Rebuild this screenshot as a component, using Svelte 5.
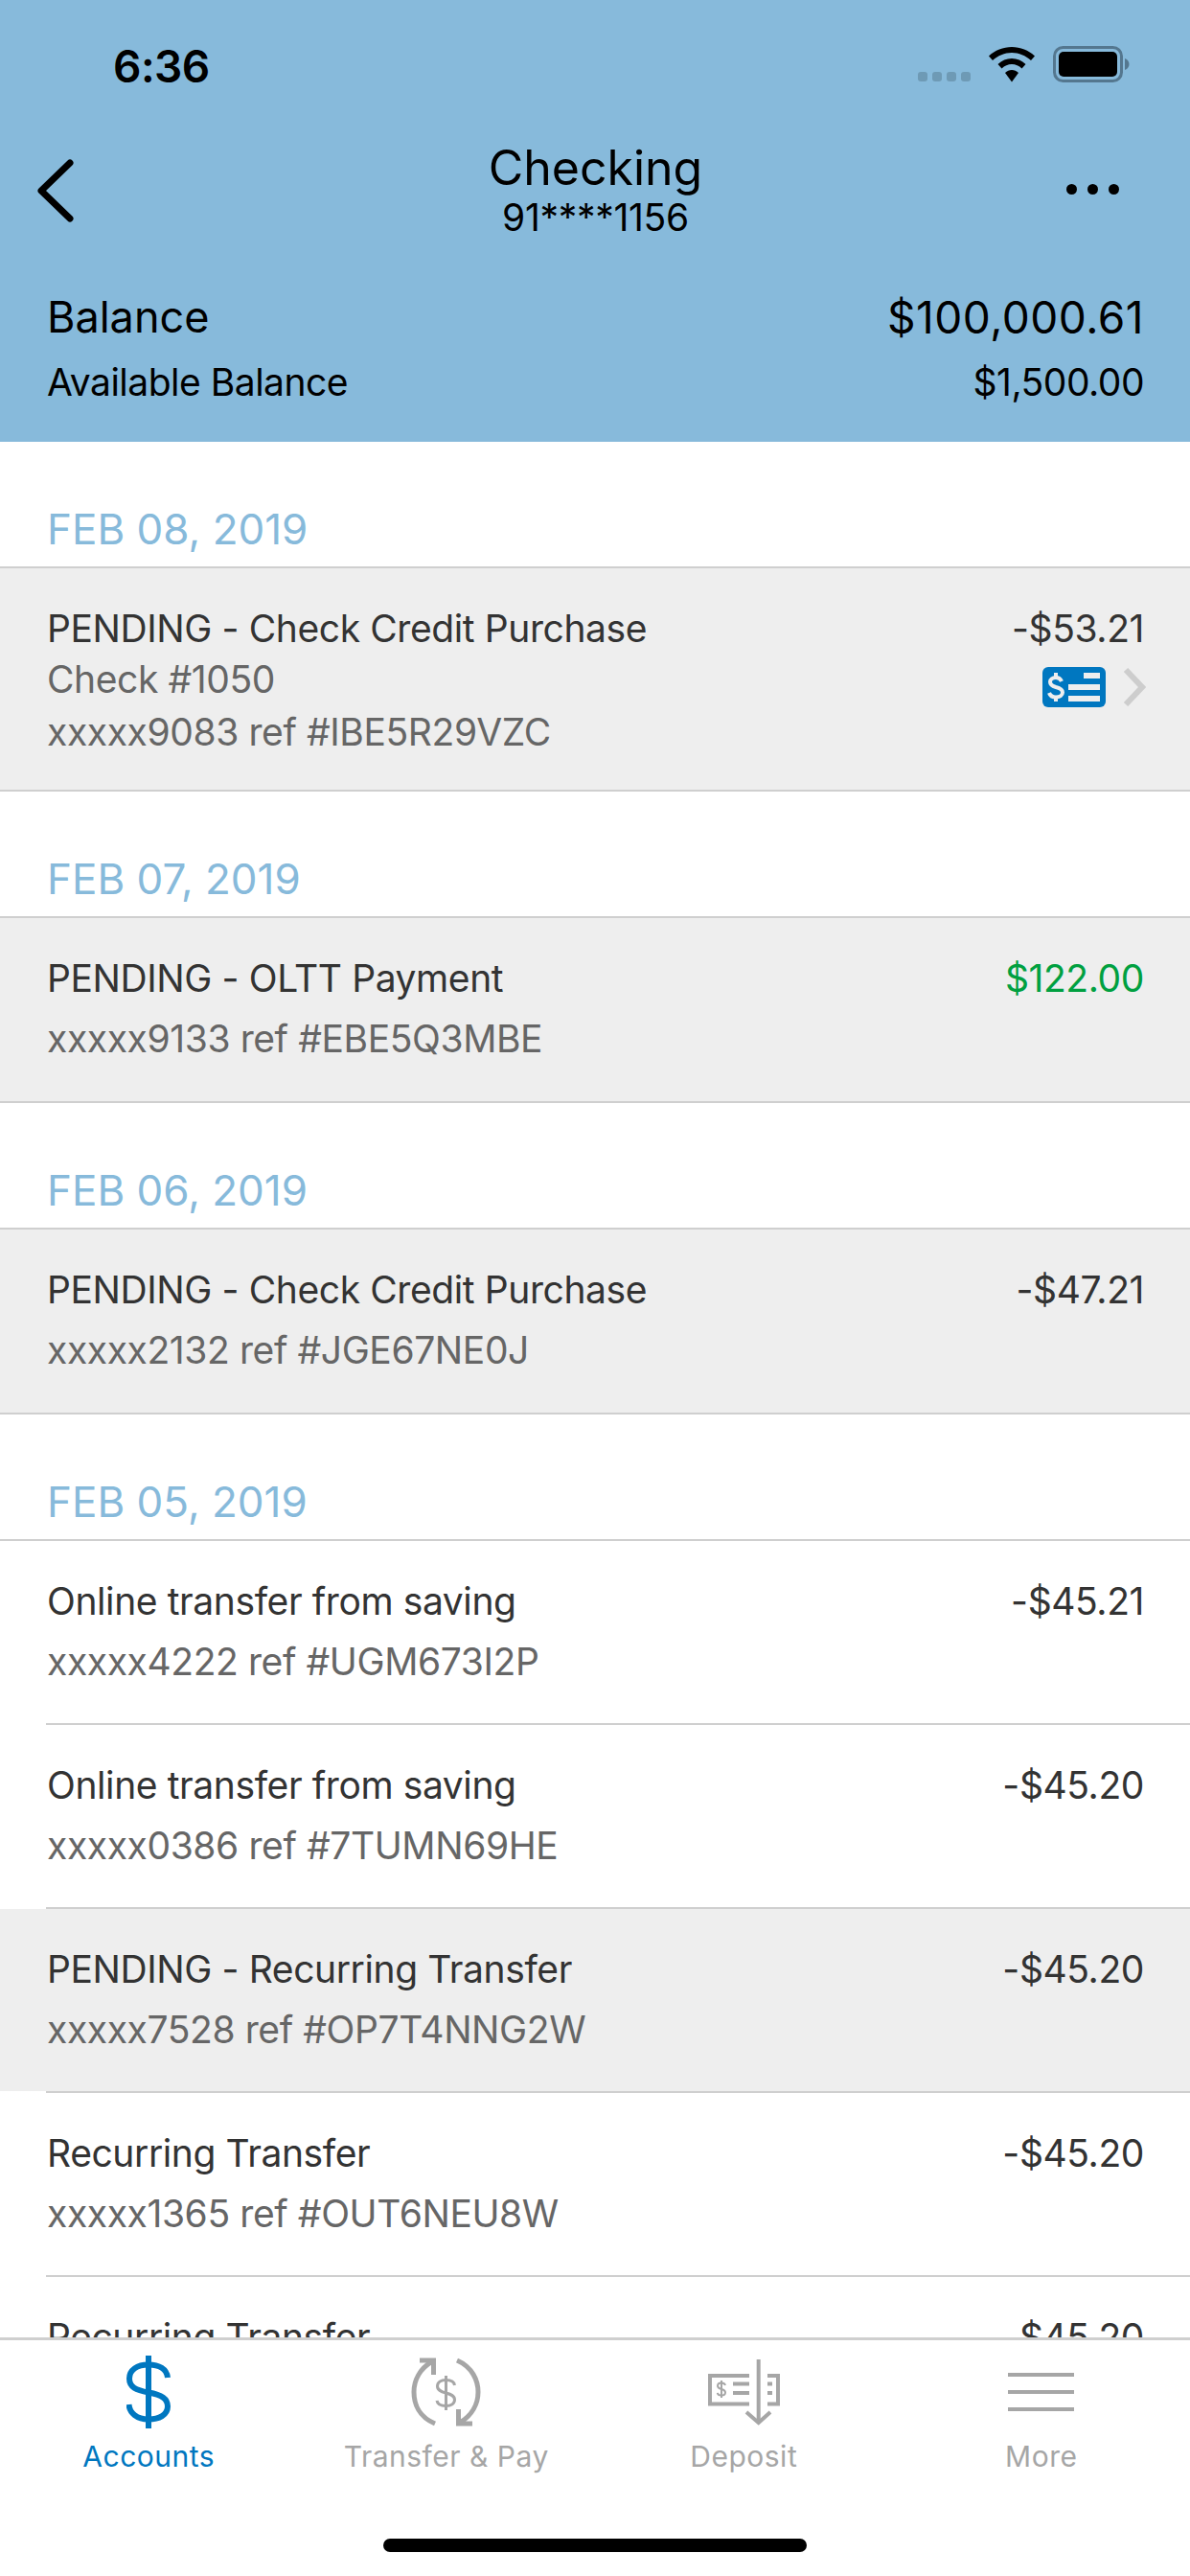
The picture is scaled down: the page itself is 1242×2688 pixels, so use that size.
<script>
    const sections = [
        {
            date: 'FEB 08, 2019',
            rows: [
                { title: 'PENDING - Check Credit Purchase', check: 'Check #1050', ref: 'xxxxx9083 ref #IBE5R29VZC', amount: '-$53.21', pending: true }
            ]
        },
        {
            date: 'FEB 07, 2019',
            rows: [
                { title: 'PENDING - OLTT Payment', ref: 'xxxxx9133 ref #EBE5Q3MBE', amount: '$122.00', pending: true, credit: true }
            ]
        },
        {
            date: 'FEB 06, 2019',
            rows: [
                { title: 'PENDING - Check Credit Purchase', ref: 'xxxxx2132 ref #JGE67NE0J', amount: '-$47.21', pending: true }
            ]
        }
    ];

    const feb05 = [
        { title: 'Online transfer from saving', ref: 'xxxxx4222 ref #UGM673I2P', amount: '-$45.21' },
        { title: 'Online transfer from saving', ref: 'xxxxx0386 ref #7TUMN69HE', amount: '-$45.20' },
        { title: 'PENDING - Recurring Transfer', ref: 'xxxxx7528 ref #OP7T4NNG2W', amount: '-$45.20', pending: true },
        { title: 'Recurring Transfer', ref: 'xxxxx1365 ref #OUT6NEU8W', amount: '-$45.20' },
        { title: 'Recurring Transfer', ref: '', amount: '-$45.20' }
    ];
</script>

{#snippet txRow(row)}
    <div class="row" class:pending={row.pending} class:tall={row.check}>
        <div class="row-text">
            <div class="row-title">{row.title}</div>
            {#if row.check}<div class="row-check">{row.check}</div>{/if}
            {#if row.ref}<div class="row-ref">{row.ref}</div>{/if}
        </div>
        <div class="row-side">
            <div class="row-amount" class:credit={row.credit}>{row.amount}</div>
            {#if row.check}
                <div class="check-link">
                    <svg width="66" height="42" viewBox="0 0 66 42">
                        <rect width="66" height="42" rx="6" fill="#0077c0" />
                        <g fill="none" stroke="#eee" stroke-width="4">
                            <path d="M20 15C19 12.500 17 11 14 11C10.500 11 8 13 8 15.500C8 18.500 10.500 20 14 21C18 22 21 23.500 21 26.500C21 29.500 18 31.500 14 31.500C10.500 31.500 8 30 7 27" />
                            <path d="M14 6V11M14 31V36" />
                        </g>
                        <g fill="#eee">
                            <rect x="43" y="6" width="17" height="6" />
                            <rect x="27" y="18" width="33" height="6" />
                            <rect x="27" y="30" width="33" height="6" />
                        </g>
                    </svg>
                    <svg width="24" height="40" viewBox="0 0 24 40">
                        <path d="M3 2L20 20L3 38" fill="none" stroke="#cdcdcd" stroke-width="6" />
                    </svg>
                </div>
            {/if}
        </div>
    </div>
{/snippet}

<div class="screen">
    <header class="top">
        <div class="status">
            <span class="time">6:36</span>
            <div class="status-icons">
                <div class="signal"><i></i><i></i><i></i><i></i></div>
                <svg width="48" height="37" viewBox="0 0 48 37">
                    <path d="M24 0C15 0 6.500 3.500 0 9.500L4 14C9.500 9 16.500 6 24 6C31.500 6 38.500 9 44 14L48 9.500C41.500 3.500 33 0 24 0Z" />
                    <path d="M24 12C18.500 12 13.500 14 9.500 18L13.500 22.500C16.500 19.500 20 18 24 18C28 18 31.500 19.500 34.500 22.500L38.500 18C34.500 14 29.500 12 24 12Z" />
                    <path d="M24 24C21.500 24 19 25 17 27L24 36.500L31 27C29 25 26.500 24 24 24Z" />
                </svg>
                <svg width="80" height="38" viewBox="0 0 80 38">
                    <rect x="1.500" y="1.500" width="70" height="35" rx="9" fill="none" stroke="#54778f" stroke-width="3" />
                    <rect x="6" y="6" width="61" height="26" rx="5" fill="#000" />
                    <path d="M75 13C78 14 79.500 16.500 79.500 19C79.500 21.500 78 24 75 25Z" fill="#54778f" />
                </svg>
            </div>
        </div>
        <div class="nav">
            <svg class="back" width="44" height="68" viewBox="0 0 44 68">
                <path d="M38 5L8 34L38 63" fill="none" stroke="#000" stroke-width="7" stroke-linecap="round" stroke-linejoin="round" />
            </svg>
            <div class="nav-title">
                <div class="title">Checking</div>
                <div class="account">91****1156</div>
            </div>
            <div class="dots"><i></i><i></i><i></i></div>
        </div>
        <div class="balance">
            <span>Balance</span><span class="big-value">$100,000.61</span>
        </div>
        <div class="available">
            <span>Available Balance</span><span>$1,500.00</span>
        </div>
    </header>

    <main class="list">
        {#each sections as section}
            <div class="date">{section.date}</div>
            <div class="group">
                {#each section.rows as row}
                    {@render txRow(row)}
                {/each}
            </div>
        {/each}
        <div class="date">FEB 05, 2019</div>
        {#each feb05 as row, i}
            {#if i > 0}<div class="inset"></div>{/if}
            {@render txRow(row)}
        {/each}
    </main>

    <footer class="tabs">
        <div class="tab-row">
            <div class="tab active">
                <svg width="46" height="76" viewBox="0 0 46 76">
                    <g fill="none" stroke="#0077c0" stroke-width="6">
                        <path d="M23 0V76" />
                        <path d="M43 23C42 14 34 9.500 23 9.500C11 9.500 3 15 3 24C3 33 10 36 23 38.500C37 41 43 45 43 53C43 62 34 66.500 23 66.500C11 66.500 3 60 2.500 51" />
                    </g>
                </svg>
                <span>Accounts</span>
            </div>
            <div class="tab">
                <svg width="73" height="76" viewBox="0 0 73 72">
                    <g fill="none" stroke="#a6a6a6" stroke-width="5">
                        <path d="M25 69C8 62 3 48 3 36C3 24 9 12 22 4" />
                        <path d="M9 3H23.500V18" />
                        <path d="M48 3C64 10 70 24 70 36C70 48 64 60 51 68" />
                        <path d="M64 69H49.500V54" />
                    </g>
                    <g fill="none" stroke="#a6a6a6" stroke-width="3">
                        <path d="M36.500 19V55" />
                        <path d="M45.500 29C45 25.500 41.500 23.500 36.500 23.500C31 23.500 27.500 26 27.500 30C27.500 34 31 35.500 36.500 37C42 38.500 45.500 40 45.500 44C45.500 48 42 50.500 36.500 50.500C31 50.500 27.500 48.500 27 45" />
                    </g>
                </svg>
                <span>Transfer &amp; Pay</span>
            </div>
            <div class="tab">
                <svg width="75" height="76" viewBox="0 0 75 68">
                    <g fill="none" stroke="#a6a6a6" stroke-width="4">
                        <path d="M43 17H2V46.500H43" />
                        <path d="M62 17H73V46.500H62" />
                        <path d="M26 25.500H43" />
                        <path d="M26 35H43" />
                        <path d="M62 25.500H67" />
                        <path d="M62 35H67" />
                        <path d="M52.700 0V66" />
                        <path d="M40 55L52.700 66L65 55" />
                    </g>
                    <g fill="none" stroke="#a6a6a6" stroke-width="2">
                        <path d="M14 22V40" />
                        <path d="M18 27C17.500 25.500 16 24.500 14 24.500C11.500 24.500 10 25.800 10 27.500C10 29.500 11.500 30.300 14 31C16.500 31.700 18 32.500 18 34.500C18 36.300 16.500 37.500 14 37.500C11.500 37.500 10 36.300 9.800 34.800" />
                    </g>
                </svg>
                <span>Deposit</span>
            </div>
            <div class="tab">
                <svg width="69" height="76" viewBox="0 0 69 76">
                    <g fill="#a6a6a6">
                        <rect y="18" width="69" height="4" />
                        <rect y="36" width="69" height="4" />
                        <rect y="54" width="69" height="4" />
                    </g>
                </svg>
                <span>More</span>
            </div>
        </div>
        <div class="home"></div>
    </footer>
</div>

<style>
    :global(body) {
        margin: 0;
        background: #fff;
    }

    .screen {
        width: 1242px;
        height: 2688px;
        display: flex;
        flex-direction: column;
        overflow: hidden;
        font-family: Inter, "Noto Sans", sans-serif;
        color: #000;
    }

    .top {
        height: 461px;
        flex: none;
        box-sizing: border-box;
        background: #87badb;
        padding: 0 48px 0 49px;
    }

    .status {
        height: 147px;
        display: flex;
        justify-content: space-between;
        align-items: flex-start;
        margin-right: 15px;
        padding-left: 69px;
    }

    .time {
        font-size: 46px;
        line-height: 56px;
        font-weight: 600;
        margin-top: 41px;
        letter-spacing: -0.5px;
    }

    .status-icons {
        display: flex;
        align-items: flex-end;
        gap: 19px;
        margin-top: 48px;
    }

    .signal {
        display: flex;
        gap: 5px;
        padding-bottom: 1px;
    }

    .signal i {
        width: 10px;
        height: 10px;
        border-radius: 3px;
        background: #6e9ab5;
    }

    .nav {
        display: flex;
        justify-content: space-between;
        align-items: center;
        position: relative;
        height: 104px;
        margin-bottom: 52px;
    }

    .back {
        margin-left: -14px;
        margin-top: -1px;
    }

    .nav-title {
        position: absolute;
        left: 0;
        right: 0;
        top: 0;
        text-align: center;
    }

    .title {
        font-size: 50px;
        line-height: 56px;
    }

    .account {
        font-size: 39px;
        line-height: 48px;
        letter-spacing: -0.3px;
    }

    .dots {
        display: flex;
        gap: 11px;
        margin-right: 26px;
        margin-top: -3px;
    }

    .dots i {
        width: 11px;
        height: 11px;
        border-radius: 50%;
        background: #000;
    }

    .balance,
    .available {
        display: flex;
        justify-content: space-between;
    }

    .balance {
        font-size: 45px;
        line-height: 56px;
        margin-bottom: 16px;
    }

    .big-value {
        font-size: 46px;
        letter-spacing: 0.5px;
    }

    .available {
        font-size: 39px;
        line-height: 48px;
        letter-spacing: -0.5px;
    }

    .list {
        flex: 1;
        min-height: 0;
        overflow: hidden;
    }

    .date {
        height: 132px;
        box-sizing: border-box;
        padding: 65px 50px 0 49px;
        border-bottom: 2px solid #cfcfcf;
        font-size: 44px;
        line-height: 52px;
        color: #87badb;
    }

    .group {
        border-bottom: 2px solid #cfcfcf;
    }

    .row {
        display: flex;
        justify-content: space-between;
        box-sizing: border-box;
        height: 190px;
        padding: 37px 48px 0 49px;
    }

    .group .row {
        height: 191px;
    }

    .group .row.tall {
        height: 231px;
    }

    .row.pending {
        background: #eee;
    }

    .inset {
        height: 2px;
        margin-left: 48px;
        background: #cfcfcf;
    }

    .row-title,
    .row-check,
    .row-ref,
    .row-amount {
        font-size: 39px;
        line-height: 52px;
        letter-spacing: -0.4px;
        white-space: nowrap;
    }

    .row-title,
    .row-amount {
        color: #333;
    }

    .row-amount.credit {
        color: #00a040;
    }

    .row-check,
    .row-ref {
        color: #666;
    }

    .row-ref {
        margin-top: 11px;
    }

    .row-check {
        margin-top: 1px;
    }

    .row-check + .row-ref {
        margin-top: 3px;
    }

    .row-side {
        display: flex;
        flex-direction: column;
        align-items: flex-end;
    }

    .check-link {
        display: flex;
        align-items: center;
        gap: 18px;
        margin-top: 14px;
        margin-right: -2px;
    }

    .tabs {
        flex: none;
        height: 249px;
        box-sizing: border-box;
        background: #fff;
        border-top: 3px solid #cfcfcf;
    }

    .tab-row {
        display: grid;
        grid-template-columns: repeat(4, 1fr);
        padding-top: 16px;
    }

    .tab {
        display: flex;
        flex-direction: column;
        align-items: center;
        gap: 11px;
        font-size: 30px;
        line-height: 36px;
        letter-spacing: 0.5px;
        color: #a6a6a6;
    }

    .tab.active {
        color: #0077c0;
    }

    .home {
        width: 442px;
        height: 14px;
        border-radius: 7px;
        background: #000;
        margin: 68px auto 0;
    }
</style>
